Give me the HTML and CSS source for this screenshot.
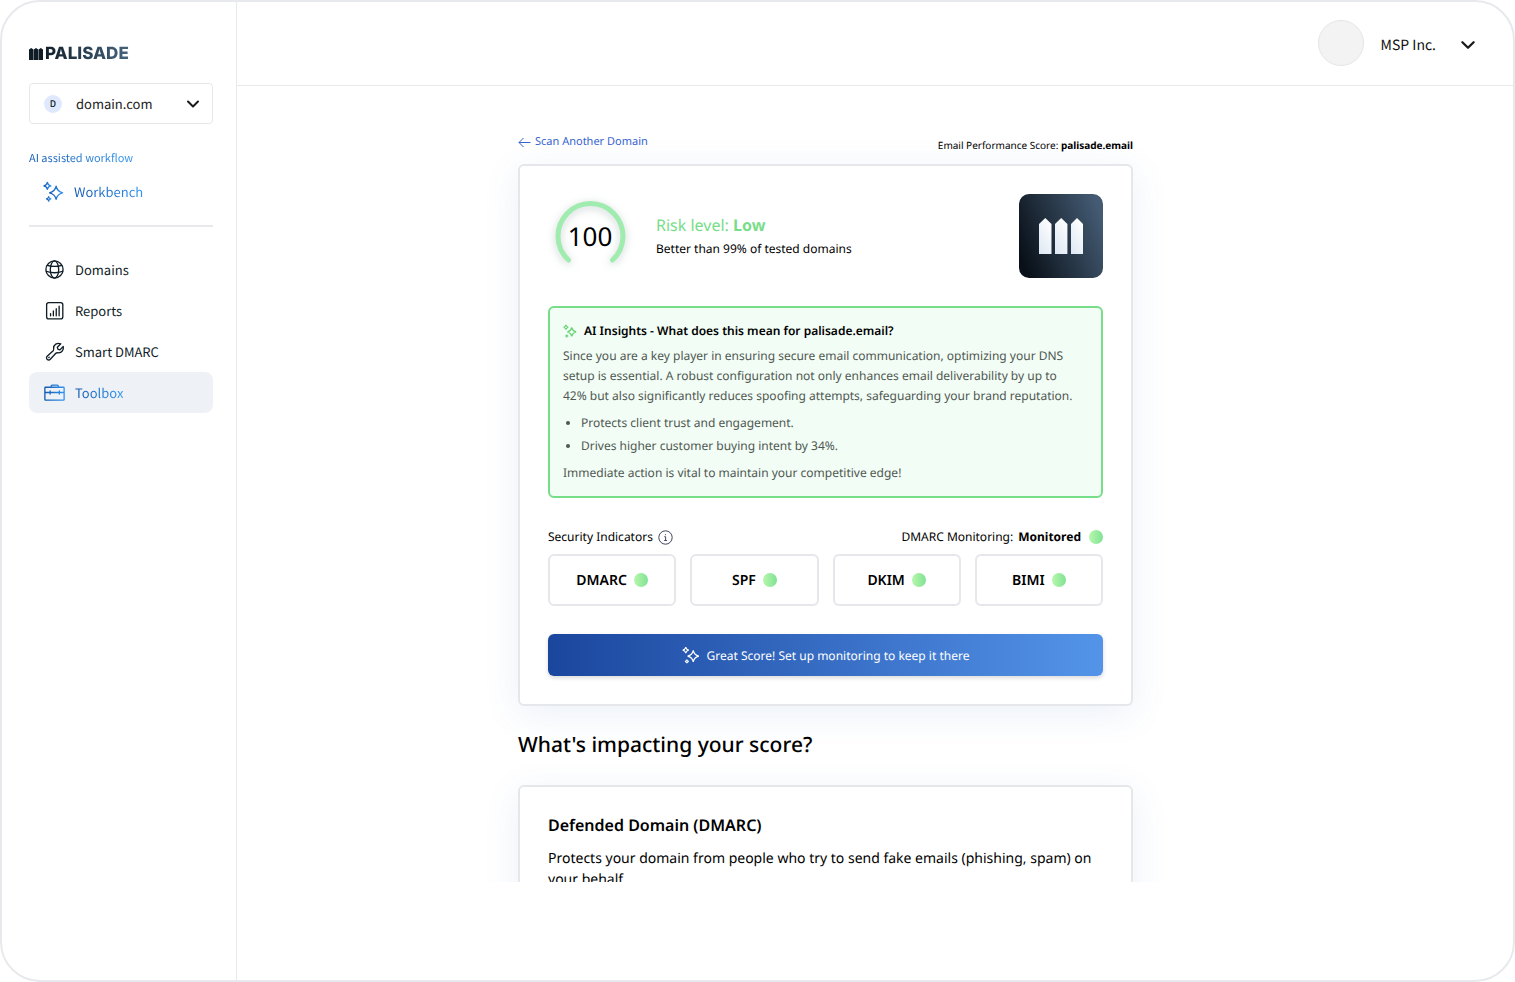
FILE: index.html
```html
<!DOCTYPE html>
<html lang="en">
<head>
<meta charset="utf-8">
<meta name="viewport" content="width=device-width, initial-scale=1">
<title>Palisade – Email score</title>
<link rel="stylesheet" href="styles.css">
</head>
<body>
<svg class="defs" width="0" height="0" aria-hidden="true">
  <defs>
    <linearGradient id="blue" x1="0" y1="0" x2="1" y2="0"><stop offset="0" stop-color="#1258b0"/><stop offset="1" stop-color="#3295f0"/></linearGradient>
    <linearGradient id="tile" x1="0" y1="0.7" x2="1" y2="0.3"><stop offset="0" stop-color="#091018"/><stop offset="1" stop-color="#445b73"/></linearGradient>
    <linearGradient id="pale" x1="0.8" y1="0" x2="0.2" y2="1"><stop offset="0" stop-color="#ffffff"/><stop offset="1" stop-color="#dfe9f4"/></linearGradient>
    <symbol id="sparkles" viewBox="0 0 24 24">
      <path d="M15 6Q16.400 12.100 22.500 13.500Q16.400 14.900 15 21Q13.600 14.900 7.500 13.500Q13.600 12.100 15 6Z"/>
      <path d="M5 1.500Q5.700 4.800 9 5.500Q5.700 6.200 5 9.500Q4.300 6.200 1 5.500Q4.300 4.800 5 1.500Z"/>
      <path d="M6.500 18Q6.900 20.100 9 20.500Q6.900 20.900 6.500 23Q6.100 20.900 4 20.500Q6.100 20.100 6.500 18Z"/>
    </symbol>
  </defs>
</svg>
<div class="shell">
  <aside class="sidebar">
    <a class="brand" href="#" aria-label="Palisade">
      <svg class="brand-mark" viewBox="0 0 14 12" aria-hidden="true"><path d="M0 12V1.500L2.200 0L4.400 1.500V12ZM4.800 12V1.500L7 0L9.200 1.500V12ZM9.600 12V1.500L11.800 0L14 1.500V12Z" fill="#0f1c26"/></svg>
      <span class="brand-name">PALISADE</span>
    </a>
    <div class="domain-picker">
      <span class="domain-badge">D</span>
      <select class="domain-select" aria-label="Domain"><option>domain.com</option></select>
      <svg class="chevron" viewBox="0 0 16 16" aria-hidden="true"><path d="M3 5.500L8 10.500L13 5.500"/></svg>
    </div>
    <p class="section-label"><span class="blue-text">AI assisted workflow</span></p>
    <nav class="nav nav-ai">
      <a class="nav-item" href="#"><svg class="nav-icon stroke-blue" aria-hidden="true"><use href="#sparkles"/></svg><span class="blue-text">Workbench</span></a>
    </nav>
    <hr class="divider">
    <nav class="nav">
      <a class="nav-item" href="#"><svg class="nav-icon" viewBox="0 0 24 24" aria-hidden="true"><circle cx="12" cy="12" r="9.800"/><ellipse cx="12" cy="12" rx="4.800" ry="9.800"/><path d="M3.800 7.200Q12 9.800 20.200 7.200M2.500 14Q12 17.500 21.500 14"/></svg><span>Domains</span></a>
      <a class="nav-item" href="#"><svg class="nav-icon" viewBox="0 0 24 24" aria-hidden="true"><rect x="3" y="3" width="18.500" height="18.500" rx="2.500"/><path d="M7.500 18V15.500M10.700 18V12.500M14 18V10M17.300 18V7"/></svg><span>Reports</span></a>
      <a class="nav-item" href="#"><svg class="nav-icon" viewBox="0 0 24 24" aria-hidden="true"><path d="M19.200 3.200L15.200 7.200L16 9.500L18.200 10.100L22 6.200C22.700 10 20.500 13.600 16.400 13.500C15.200 13.400 14.300 13.300 13.500 14L7.200 20.800C5 23.300 1.300 20 3.600 17.500L10.500 11.200C11.200 10.500 11.100 9.500 11 8.400C10.900 4.300 15 1.500 19.200 3.200Z"/><path d="M5.500 18.900L6 18.400"/></svg><span>Smart DMARC</span></a>
      <a class="nav-item active" href="#" aria-current="page"><svg class="nav-icon stroke-blue" viewBox="0 0 24 24" aria-hidden="true"><path d="M1.800 6H22.200Q23 6 23 6.800V20Q23 20.800 22.200 20.800H1.800Q1 20.800 1 20V6.800Q1 6 1.800 6ZM8 6V5Q8 3.500 9.500 3.500H15Q16.500 3.500 16.500 5V6M1 12H6.500M7.500 12H17M18 12H23M7 10.200V13.800M17.500 10.200V13.800"/></svg><span class="blue-text">Toolbox</span></a>
    </nav>
  </aside>

  <div class="workspace">
    <header class="topbar">
      <span class="avatar"></span>
      <button class="account" type="button" aria-haspopup="menu">MSP Inc.
        <svg class="chevron chevron-lg" viewBox="0 0 16 16" aria-hidden="true"><path d="M3 5.500L8 10.500L13 5.500"/></svg>
      </button>
    </header>

    <main class="content">
      <div class="column">
        <div class="toolbar">
          <a class="back" href="#"><svg viewBox="0 0 13 13" aria-hidden="true"><path d="M12.500 6.500H1M5.500 2L1 6.500L5.500 11"/></svg>Scan Another Domain</a>
          <p class="score-for">Email Performance Score: <strong>palisade.email</strong></p>
        </div>

        <section class="card">
          <div class="summary">
            <div class="gauge">
              <svg viewBox="0 0 84 84" aria-hidden="true"><path d="M20.500 66A32.500 32.500 0 1 1 64.500 66"/></svg>
              <span class="gauge-value">100</span>
            </div>
            <div class="risk">
              <p class="risk-level">Risk level: <strong>Low</strong></p>
              <p class="risk-note">Better than 99% of tested domains</p>
            </div>
            <svg class="tile" viewBox="0 0 84 84" role="img" aria-label="Palisade logo"><rect width="84" height="84" rx="10" fill="url(#tile)"/><path d="M20 60V30L26.300 24L32.500 30V60Z" fill="url(#pale)"/><path d="M36 60V30L42.200 24L48.400 30V60Z" fill="url(#pale)"/><path d="M52 60V30L58 24L64 30V60Z" fill="url(#pale)"/></svg>
          </div>

          <div class="insights">
            <h2 class="insights-title"><svg class="spark" aria-hidden="true"><use href="#sparkles"/></svg>AI Insights - What does this mean for palisade.email?</h2>
            <p>Since you are a key player in ensuring secure email communication, optimizing your DNS setup is essential. A robust configuration not only enhances email deliverability by up to 42% but also significantly reduces spoofing attempts, safeguarding your brand reputation.</p>
            <ul>
              <li>Protects client trust and engagement.</li>
              <li>Drives higher customer buying intent by 34%.</li>
            </ul>
            <p>Immediate action is vital to maintain your competitive edge!</p>
          </div>

          <div class="indicator-head">
            <span class="with-icon">Security Indicators <svg class="info" viewBox="0 0 15 15" aria-hidden="true"><circle cx="7.500" cy="7.500" r="6.700"/><path d="M6.300 6.700H7.600V10.500M6.200 10.500H9M7.400 4.200V5.200"/></svg></span>
            <span class="with-icon">DMARC Monitoring: <strong>Monitored</strong><i class="dot"></i></span>
          </div>
          <div class="indicators">
            <div class="indicator">DMARC<i class="dot"></i></div>
            <div class="indicator">SPF<i class="dot"></i></div>
            <div class="indicator">DKIM<i class="dot"></i></div>
            <div class="indicator">BIMI<i class="dot"></i></div>
          </div>
          <button class="cta" type="button"><svg class="cta-icon" aria-hidden="true"><use href="#sparkles"/></svg>Great Score! Set up monitoring to keep it there</button>
        </section>

        <h1 class="impact">What's impacting your score?</h1>

        <section class="card">
          <h2 class="detail-title">Defended Domain (DMARC)</h2>
          <p class="detail-text">Protects your domain from people who try to send fake emails (phishing, spam) on your behalf.</p>
        </section>
      </div>
    </main>
  </div>
</div>
</body>
</html>
```
FILE: styles.css
```css
* { box-sizing: border-box; }
body { margin: 0; background: #fff; color: #000; font-family: "Noto Sans", sans-serif; font-size: 12px; text-rendering: geometricPrecision; }
p, h1, h2, ul { margin: 0; }
a { text-decoration: none; color: inherit; }
button, select { text-rendering: inherit; }
svg { flex: none; }
.defs { position: absolute; }

.shell { display: flex; height: 100vh; border: 2px solid #e8e9ed; border-radius: 40px; overflow: hidden; background: #fff; }

/* Sidebar */
.sidebar { flex: none; width: 235px; padding: 44px 23px 0 27px; border-right: 1px solid #e8e9ed; font-family: "Noto Sans CJK SC", sans-serif; font-size: 13px; color: #0f1c26; }
.brand { display: flex; align-items: center; gap: 2px; height: 16px; }
.brand-mark { width: 14px; height: 12px; }
.brand-name { font: 800 17px/20px Inter, sans-serif; color: transparent; background: linear-gradient(90deg, #12202b, #45637d); background-clip: text; -webkit-background-clip: text; }
.domain-picker { display: flex; align-items: center; gap: 14px; height: 41px; margin-top: 21px; padding: 0 11px 0 14px; border: 1px solid #e6e7ea; border-radius: 4px; }
.domain-badge { display: grid; place-items: center; width: 18px; height: 18px; border-radius: 50%; background: #dfe9fd; font-size: 9px; font-weight: 500; }
.domain-select { flex: 1; min-width: 0; padding: 0; border: 0; background: none; appearance: none; font: inherit; color: #222; }
.chevron { width: 16px; height: 16px; fill: none; stroke: #1a1a1a; stroke-width: 2; stroke-linecap: round; stroke-linejoin: round; }
.chevron-lg { width: 18px; height: 18px; }
.section-label { margin-top: 24px; font-size: 11px; line-height: 20px; }
.blue-text { color: transparent; background: linear-gradient(90deg, #1258b0, #3295f0); background-clip: text; -webkit-background-clip: text; }
.nav { display: flex; flex-direction: column; }
.nav-item { display: flex; align-items: center; gap: 10px; height: 41px; padding: 0 15px; border-radius: 8px; }
.nav-ai { margin-top: 3px; }
.nav-ai .nav-item { padding-left: 14px; }
.nav-item.active { background: #eef2f6; }
.nav-icon { width: 21px; height: 21px; fill: none; stroke: currentColor; stroke-width: 1.5; stroke-linecap: round; stroke-linejoin: round; }
.stroke-blue { stroke: url(#blue); }
.divider { height: 2px; margin: 13px 0 22px; border: 0; background: #e8e9ed; }

/* Top bar */
.workspace { flex: 1; min-width: 0; display: flex; flex-direction: column; }
.topbar { flex: none; display: flex; align-items: center; justify-content: flex-end; gap: 17px; height: 84px; padding: 0 36px 2px 0; border-bottom: 1px solid #e8e9ed; }
.avatar { width: 46px; height: 46px; border: 1px solid #e4e4e4; border-radius: 50%; background: #f3f3f3; }
.account { display: flex; align-items: center; gap: 23px; padding: 4px 0 0; border: 0; background: none; font: 14px "Noto Sans CJK SC", sans-serif; color: #111; }

/* Content */
.content { flex: 1; min-height: 0; margin-bottom: 98px; padding: 46px 99px 0 0; overflow: hidden; }
.column { max-width: 615px; margin: 0 auto; }
.toolbar { display: flex; justify-content: space-between; line-height: 20px; }
.back { display: flex; align-items: center; height: 20px; gap: 4px; color: #3563cf; font-size: 11px; }
.back svg { width: 13px; height: 13px; fill: none; stroke: currentColor; }
.score-for { padding-top: 3px; font-size: 10px; }
.card { padding: 28px; border: 2px solid #e5e7eb; border-radius: 6px; background: #fff; box-shadow: 0 8px 36px rgba(60, 110, 190, 0.1); }
.toolbar + .card { margin-top: 9px; }
.summary { display: flex; align-items: center; }
.gauge { display: grid; place-items: center; width: 84px; height: 84px; }
.gauge svg, .gauge-value { grid-area: 1 / 1; }
.gauge svg { width: 84px; height: 84px; overflow: visible; fill: none; stroke: #a0ebae; stroke-width: 5; stroke-linecap: round; filter: drop-shadow(0 2px 4px rgba(40, 80, 80, 0.25)); }
.gauge-value { font-size: 26px; line-height: 36px; }
.risk { flex: 1; margin-left: 24px; }
.risk-level { font-size: 16px; line-height: 22px; color: #77dd88; }
.risk-note { margin-top: 3px; font-size: 12px; line-height: 20px; }
.tile { width: 84px; height: 84px; }
.insights { margin-top: 28px; padding: 13px; border: 2px solid #77dd88; border-radius: 6px; background: #f2fdf5; color: #4f5752; line-height: 20px; }
.insights p { padding-right: 5px; }
.insights-title { display: flex; align-items: center; gap: 7px; margin-bottom: 5px; font-size: 12px; line-height: 20px; color: #000; font-weight: 600; }
.spark { width: 14px; height: 14px; fill: none; stroke: currentColor; stroke-width: 2; color: #66d477; }
.insights ul { margin: 5px 0 6px; padding-left: 18px; line-height: 23px; }
.indicator-head { display: flex; justify-content: space-between; margin-top: 29px; line-height: 20px; }
.with-icon { display: flex; align-items: center; gap: 5px; }
.with-icon .dot { margin-left: 3px; }
.info { width: 15px; height: 15px; fill: none; stroke: #3d4663; }
.dot { flex: none; width: 14px; height: 14px; border-radius: 50%; background: linear-gradient(90deg, #b7f7ac, #80e295); }
.indicators { display: grid; grid-template-columns: repeat(4, 1fr); gap: 14px; margin-top: 7px; }
.indicator { display: flex; align-items: center; justify-content: center; gap: 7px; height: 52px; border: 2px solid #e5e7eb; border-radius: 6px; font-size: 14px; font-weight: 600; }
.cta { display: flex; align-items: center; justify-content: center; gap: 7px; width: 100%; height: 42px; margin-top: 28px; border: 0; border-radius: 6px; background: linear-gradient(90deg, #1b469e, #5394e9); box-shadow: 0 2px 4px rgba(0, 0, 0, 0.15); color: #fff; font: 12px "Noto Sans", sans-serif; }
.cta-icon { width: 18px; height: 18px; fill: none; stroke: currentColor; stroke-width: 1.5; }
.impact { margin: 24px 0 25px; font-size: 21px; line-height: 30px; font-weight: 500; }
.detail-title { font-size: 16px; line-height: 20px; font-weight: 600; }
.detail-text { margin-top: 13px; font-size: 14px; line-height: 21px; }
```
